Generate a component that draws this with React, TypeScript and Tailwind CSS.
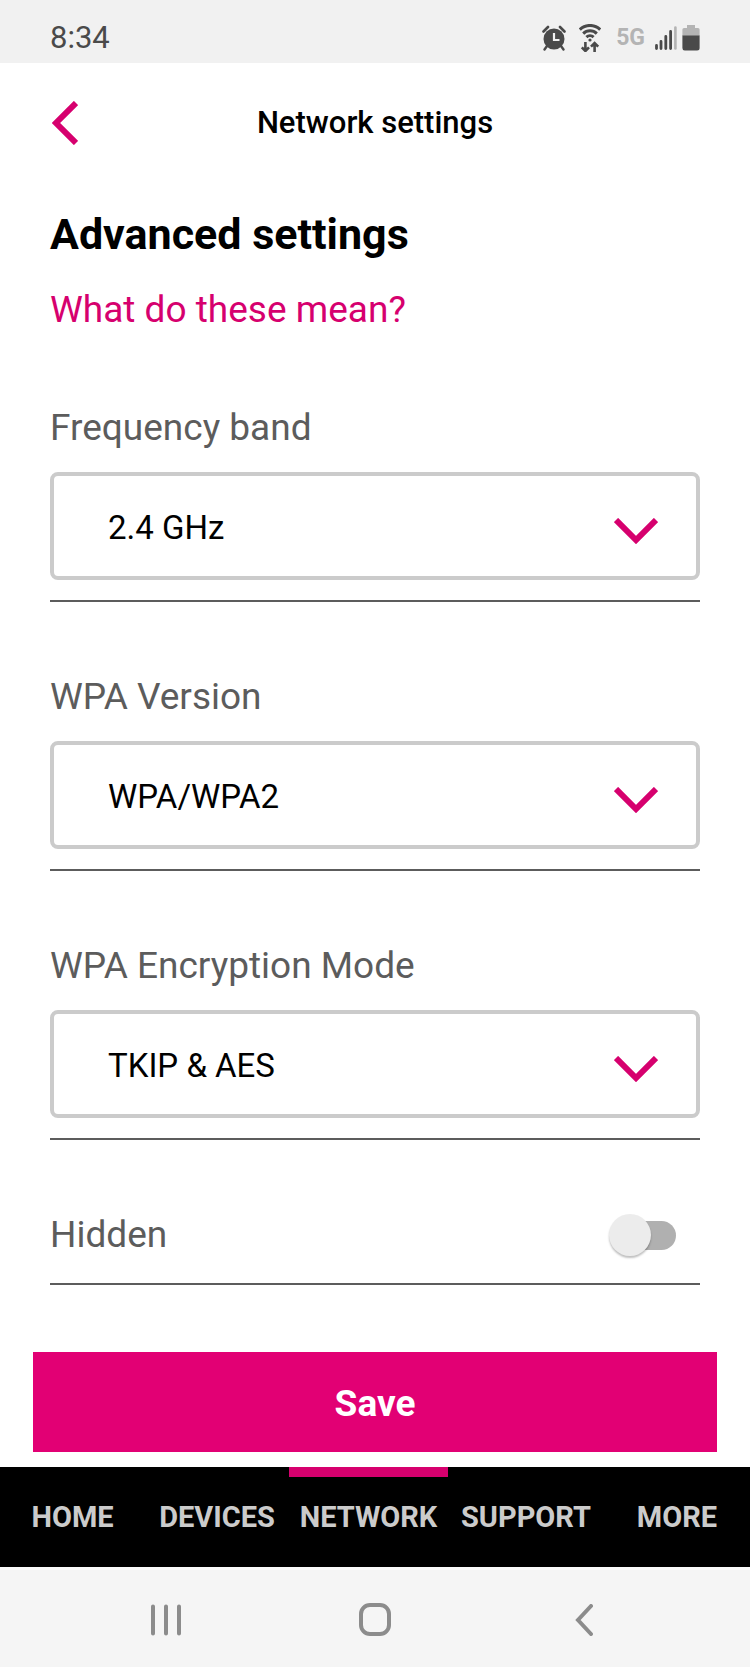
import { useState } from "react";
import type { ReactNode } from "react";

const selectFields = [
  { id: "band", label: "Frequency band", options: ["2.4 GHz", "5 GHz"] },
  { id: "wpa-version", label: "WPA Version", options: ["WPA/WPA2", "WPA2", "WPA2/WPA3"] },
  { id: "wpa-mode", label: "WPA Encryption Mode", options: ["TKIP & AES", "AES"] }
];

const tabs = ["HOME", "DEVICES", "NETWORK", "SUPPORT", "MORE"];

function StatusBar() {
  return (
    <div className="flex h-[63px] items-center justify-between bg-[#f1f1f1] pt-3 pr-[50px] pl-[50px] text-[#4a4a4a]">
      <span className="text-[31px] leading-9">8:34</span>
      <div className="flex items-center">
        <svg aria-hidden="true" className="h-[26px] w-6" fill="none" viewBox="0 0 24 26">
          <circle cx="12" cy="14" fill="currentColor" r="10.5" />
          <path d="M1.5 6.5 6 2M22.5 6.5 18 2" stroke="currentColor" strokeLinecap="round" strokeWidth="2.6" />
          <path d="m5 21-2.5 3.5M19 21l2.5 3.5" stroke="currentColor" strokeLinecap="round" strokeWidth="2.4" />
          <path d="M12 8v7h5.5" stroke="#f1f1f1" strokeWidth="2.2" />
        </svg>
        <svg aria-hidden="true" className="ml-[13px] h-7 w-[22px]" fill="none" viewBox="0 0 22 28">
          <path d="M.8 5.600a14.600 14.600 0 0 1 20.400 0M4.200 9.600a9.800 9.800 0 0 1 13.600 0M7.400 13.200a5.200 5.200 0 0 1 7.200 0" stroke="currentColor" strokeWidth="3" />
          <circle cx="11" cy="16" fill="currentColor" r="1.6" />
          <path d="M6.400 18v9M2.800 23.400l3.600 3.600 3.600-3.600M15.600 28v-8.600M12 22.600l3.600-3.600 3.600 3.600" stroke="currentColor" strokeWidth="2.6" />
        </svg>
        <span className="ml-[15px] text-[23px] leading-7 font-bold text-[#b4b4b4]">5G</span>
        <svg aria-hidden="true" className="ml-2.5 h-6 w-[22px]" fill="none" viewBox="0 0 22 24">
          <path d="M1.5 19.5v3M6 15.5v7M10.8 10.5v12M15.6 5.5v17" stroke="currentColor" strokeLinecap="round" strokeWidth="2.8" />
          <path d="M20.4 1.5v21" stroke="#b4b4b4" strokeLinecap="round" strokeWidth="2.6" />
        </svg>
        <svg aria-hidden="true" className="ml-[5px] h-[26px] w-[18px]" viewBox="0 0 18 26">
          <path d="M5 0h8v3h3a1.6 1.6 0 0 1 1.6 1.6V11H.4V4.6A1.6 1.6 0 0 1 2 3h3z" fill="#b4b4b4" />
          <path d="M.4 10.5h17.2V23a2.5 2.5 0 0 1-2.5 2.5H3A2.5 2.5 0 0 1 .4 23z" fill="currentColor" />
        </svg>
      </div>
    </div>
  );
}

function Row({ children }: { children: ReactNode }) {
  return <div className="border-b-2 border-[#5c5c5c] pb-5">{children}</div>;
}

function SelectField({ id, label, options }: { id: string; label: string; options: string[] }) {
  const [value, setValue] = useState(options[0]);

  return (
    <Row>
      <label className="block text-[37px] leading-[44px] text-[#5c5c5c]" htmlFor={id}>
        {label}
      </label>
      <div className="mt-[22px] grid items-center">
        <select
          className="col-start-1 row-start-1 h-[108px] w-full appearance-none rounded-lg border-4 border-[#cbcbcb] bg-white px-[54px] pt-[3px] text-[33px] text-black outline-none focus:border-[#e20074]"
          id={id}
          onChange={(event) => setValue(event.target.value)}
          value={value}
        >
          {options.map((option) => (
            <option key={option}>{option}</option>
          ))}
        </select>
        <svg
          aria-hidden="true"
          className="pointer-events-none col-start-1 row-start-1 mt-2.5 mr-[42px] h-[26px] w-11 justify-self-end"
          fill="none"
          viewBox="0 0 44 26"
        >
          <path d="m2 2 20 20L42 2" stroke="#d6006e" strokeWidth="6" />
        </svg>
      </div>
    </Row>
  );
}

function Toggle({ id }: { id: string }) {
  const [on, setOn] = useState(false);

  return (
    <span className="mr-6 grid w-[67px] items-center">
      <input
        checked={on}
        className="peer col-start-1 row-start-1 ml-[9px] h-[29px] w-[58px] appearance-none rounded-full bg-[#b0b0b0] checked:bg-[#f18cbf]"
        id={id}
        onChange={(event) => setOn(event.target.checked)}
        type="checkbox"
      />
      <span className="pointer-events-none col-start-1 row-start-1 size-[42px] rounded-full bg-[#ececec] shadow-[0_2px_2px_rgba(0,0,0,0.25)] peer-checked:justify-self-end peer-checked:bg-[#e20074]" />
    </span>
  );
}

function TabBar({ active }: { active: string }) {
  return (
    <nav className="grid h-[100px] grid-cols-[145fr_144fr_159fr_156fr_146fr] bg-black">
      {tabs.map((tab) => (
        <a
          className={
            tab === active
              ? "flex items-center justify-center border-y-10 border-t-[#d6006e] border-b-black"
              : "flex items-center justify-center border-y-10 border-black"
          }
          href={`#${tab.toLowerCase()}`}
          key={tab}
        >
          <span className="text-[29px] leading-9 font-bold text-[#cbcbcb]">{tab}</span>
        </a>
      ))}
    </nav>
  );
}

function SystemBar() {
  return (
    <div className="grid h-[100px] grid-cols-3 items-center justify-items-center border-t-3 border-[#fcfcfc] bg-[#f5f5f5] px-[61px] pt-0.5 text-[#8c8c8c]">
      <button aria-label="Recent apps">
        <svg className="h-8 w-[30px]" fill="none" stroke="currentColor" strokeLinecap="round" strokeWidth="4" viewBox="0 0 30 32">
          <path d="M2 2.5v27M15 2.5v27M28 2.5v27" />
        </svg>
      </button>
      <button aria-label="Home screen">
        <svg className="h-[33px] w-8" fill="none" stroke="currentColor" strokeWidth="4" viewBox="0 0 32 33">
          <rect height="29" rx="9" width="28" x="2" y="2" />
        </svg>
      </button>
      <button aria-label="System back">
        <svg className="h-8 w-[18px]" fill="none" stroke="currentColor" strokeLinecap="round" strokeWidth="4" viewBox="0 0 18 32">
          <path d="M16 2 3 16l13 14" />
        </svg>
      </button>
    </div>
  );
}

export default function App() {
  return (
    <div className="flex min-h-screen flex-col bg-white font-[Roboto,sans-serif] text-black">
      <StatusBar />
      <header className="grid h-[119px] grid-cols-[1fr_auto_1fr] items-center px-[52px]">
        <button aria-label="Back" className="justify-self-start">
          <svg className="h-11 w-[26px]" fill="none" viewBox="0 0 26 44">
            <path d="M24 2 4 22l20 20" stroke="#d6006e" strokeWidth="6" />
          </svg>
        </button>
        <span className="text-[31px] leading-10 font-medium">Network settings</span>
      </header>

      <main className="flex-1 px-[50px] pt-6">
        <h1 className="text-[43px] leading-[56px] font-bold">Advanced settings</h1>
        <a className="mt-5 block text-[37px] leading-[56px] text-[#d6006e]" href="#help">
          What do these mean?
        </a>
        <form className="mt-[68px]" id="advanced" onSubmit={(event) => event.preventDefault()}>
          <div className="flex flex-col gap-[73px]">
            {selectFields.map((field) => (
              <SelectField key={field.id} {...field} />
            ))}
            <Row>
              <div className="flex items-center justify-between pb-1.5">
                <label className="text-[37px] leading-[44px] text-[#5c5c5c]" htmlFor="hidden">
                  Hidden
                </label>
                <Toggle id="hidden" />
              </div>
            </Row>
          </div>
        </form>
      </main>

      <div className="px-[33px] pb-[15px]">
        <button className="h-[100px] w-full bg-[#e20074] pt-1 text-[37px] font-bold text-white" form="advanced" type="submit">
          Save
        </button>
      </div>
      <TabBar active="NETWORK" />
      <SystemBar />
    </div>
  );
}
